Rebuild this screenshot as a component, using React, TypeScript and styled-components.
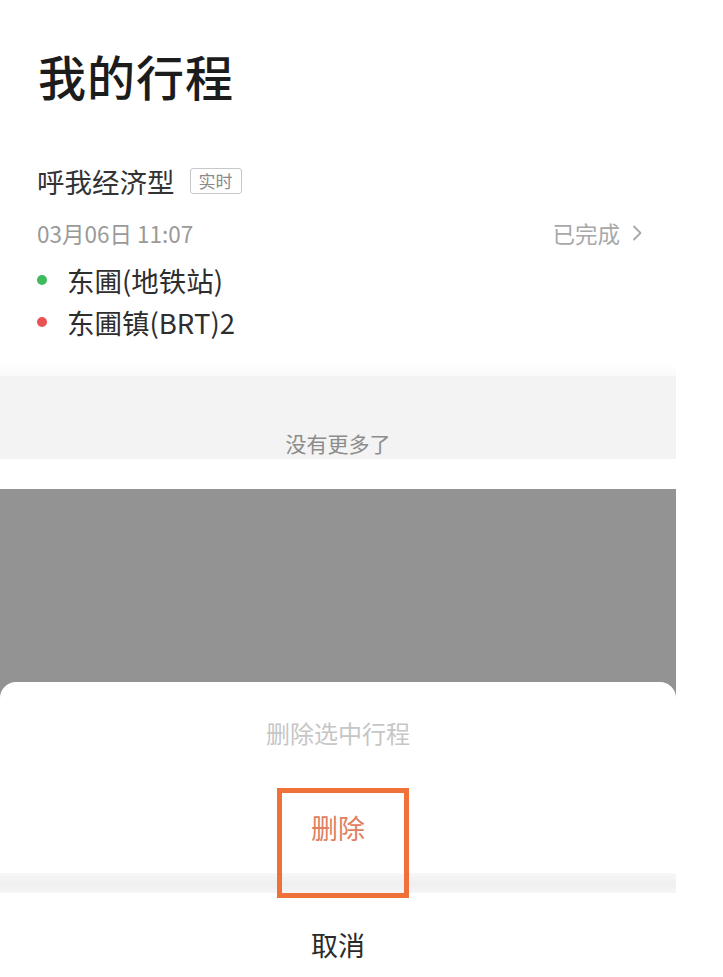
import styled, {createGlobalStyle} from 'styled-components'

const GlobalStyle = createGlobalStyle`
  html, body {
    margin: 0;
    padding: 0;
    background: #fff;
  }
  body {
    font-family: "Noto Sans CJK SC", "Noto Sans", "Liberation Sans", sans-serif;
    -webkit-font-smoothing: antialiased;
  }
`

const Page = styled.div`
  width: 676px;
  display: flex;
  flex-direction: column;
`

// first capture: the trip list
const TripScreen = styled.section`
  background: #fff;
  display: flex;
  flex-direction: column;
`

const Title = styled.h1`
  margin: 47px 0 0 38px;
  font-size: 48px;
  line-height: 56px;
  font-weight: 500;
  color: #1c1c1c;
  letter-spacing: 1px;
`

const TripCard = styled.div`
  padding: 63px 34px 0 37px;
  display: flex;
  flex-direction: column;
`

const TypeRow = styled.div`
  display: flex;
  align-items: center;
  gap: 15px;
  height: 30px;
  font-size: 27.5px;
  color: #333;
`

const Tag = styled.span`
  box-sizing: border-box;
  width: 52px;
  height: 26px;
  border: 1.5px solid #c8c8c8;
  border-radius: 3px;
  font-size: 17px;
  line-height: 23px;
  text-align: center;
  color: #8a8a8a;
`

const DateRow = styled.div`
  margin-top: 22px;
  height: 30px;
  display: flex;
  align-items: center;
  justify-content: space-between;
  font-size: 22.5px;
  color: #9a9a9a;
`

const Status = styled.span`
  display: flex;
  align-items: center;
  gap: 12px;
  color: #a8a8a8;
`

const Stops = styled.ul`
  list-style: none;
  margin: 11px 0 0;
  padding: 0;
`

const Stop = styled.li`
  display: flex;
  align-items: center;
  gap: 20px;
  height: 42px;
  font-size: 27.5px;
  color: #2e2e2e;
`

const Dot = styled.span<{$color: string}>`
  width: 10px;
  height: 10px;
  border-radius: 50%;
  background: ${({$color}) => $color};
  flex: none;
`

const Fade = styled.div`
  margin-top: 19px;
  height: 14px;
  background: linear-gradient(#fff, #fafafa);
`

const ListEnd = styled.div`
  height: 83px;
  box-sizing: border-box;
  padding-top: 54px;
  background: #f3f3f3;
  text-align: center;
  font-size: 21px;
  line-height: 26px;
  color: #8c8c8c;
`

const Gap = styled.div`
  height: 30px;
  background: #fff;
`

// second capture: the delete action sheet
const SheetScreen = styled.section`
  height: 488px;
  background: #939393;
  display: flex;
  flex-direction: column;
  justify-content: flex-end;
`

const Sheet = styled.div`
  height: 295px;
  background: #fff;
  border-radius: 16px 16px 0 0;
  display: flex;
  flex-direction: column;
`

const SheetTitle = styled.div`
  padding-top: 36px;
  text-align: center;
  font-size: 24px;
  line-height: 30px;
  color: #c6c6c6;
`

const SheetOption = styled.div<{$danger?: boolean}>`
  position: relative;
  text-align: center;
  font-size: 27px;
  line-height: 32px;
  color: ${({$danger}) => ($danger ? '#e0805e' : '#2a2a2a')};
  padding: ${({$danger}) => ($danger ? '64px 0 29px' : '36px 0 0')};
`

const Highlight = styled.span`
  position: absolute;
  z-index: 1;
  left: 277px;
  top: 40px;
  width: 132px;
  height: 110px;
  box-sizing: border-box;
  border: 5px solid #f0703a;
`

const Divider = styled.div`
  height: 20px;
  background: linear-gradient(#f7f7f7, #efefef 60%, #f6f6f6);
`

function Chevron() {
  return (
    <svg width="10" height="16" viewBox="0 0 10 16" fill="none">
      <polyline points="2,1.5 8.5,8 2,14.5" stroke="#a8a8a8" strokeWidth="1.8" strokeLinecap="round" strokeLinejoin="round" />
    </svg>
  )
}

export default function App() {
  return (
    <Page>
      <GlobalStyle />
      <TripScreen>
        <Title>我的行程</Title>
        <TripCard>
          <TypeRow>
            呼我经济型
            <Tag>实时</Tag>
          </TypeRow>
          <DateRow>
            <span>03月06日 11:07</span>
            <Status>
              已完成
              <Chevron />
            </Status>
          </DateRow>
          <Stops>
            <Stop><Dot $color="#3fbb5c" />东圃(地铁站)</Stop>
            <Stop><Dot $color="#ea5254" />东圃镇(BRT)2</Stop>
          </Stops>
        </TripCard>
        <Fade />
        <ListEnd>没有更多了</ListEnd>
      </TripScreen>
      <Gap />
      <SheetScreen>
        <Sheet>
          <SheetTitle>删除选中行程</SheetTitle>
          <SheetOption $danger>
            删除
            <Highlight />
          </SheetOption>
          <Divider />
          <SheetOption>取消</SheetOption>
        </Sheet>
      </SheetScreen>
    </Page>
  )
}
